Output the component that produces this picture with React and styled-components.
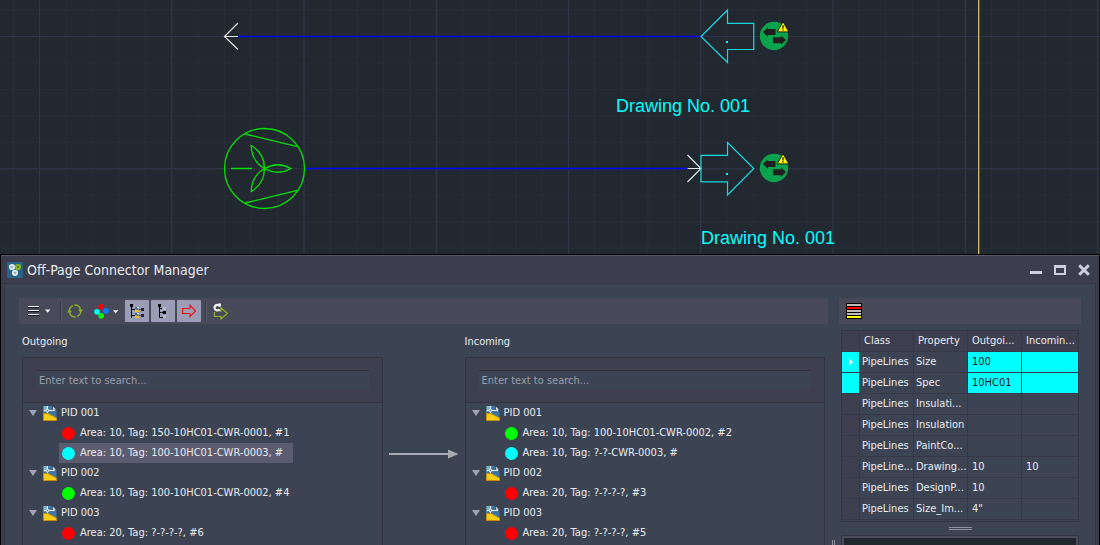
import React from "react";
import styled, { createGlobalStyle } from "styled-components";

const GlobalStyle = createGlobalStyle`
  *, *::before, *::after {
    box-sizing: border-box;
  }

  body {
    margin: 0;
    background: #000;
    color: #e9ebf2;
    font-family: "DejaVu Sans Condensed", "DejaVu Sans", sans-serif;
    font-size: 11px;
    line-height: 20px;
  }

  button, input, table {
    font: inherit;
    color: inherit;
  }
`;

const Screen = styled.div`
  display: flex;
  flex-direction: column;
  height: 100vh;
  overflow: hidden;
`;

const Canvas = styled.svg`
  display: block;
  flex: none;
  width: 100%;
  height: 254px;
  background: #212830;

  text {
    fill: #00ffff;
    font-family: "Liberation Sans", Arial, sans-serif;
    font-size: 18px;
  }
`;

const Dialog = styled.section`
  display: flex;
  flex-direction: column;
  flex: 1;
  min-height: 0;
  margin: 1px 1px 0;
  padding: 0 3px;
  border-top: 1px solid #555869;
  background: #3c3e4d;
`;

const TitleBar = styled.header`
  display: flex;
  align-items: center;
  height: 27px;
  padding-left: 3px;

  h1 {
    flex: 1;
    margin: 0 0 0 4px;
    font-size: 14px;
    font-weight: normal;
  }
`;

const WindowButton = styled.button`
  display: flex;
  width: 24px;
  height: 24px;
  padding: 0;
  align-items: center;
  justify-content: center;
  border: 0;
  background: none;
`;

const Body = styled.div`
  display: flex;
  flex: 1;
  min-height: 0;
  padding: 14px 14px 0;
  border: 1px solid #343542;
  border-bottom: 0;
  background: #3c4453;
`;

const Main = styled.div`
  display: flex;
  flex: 1;
  flex-direction: column;
  min-width: 0;
`;

const Side = styled.aside`
  display: flex;
  flex: none;
  flex-direction: column;
  width: 242px;
`;

const Toolbar = styled.div`
  display: flex;
  flex: none;
  align-items: center;
  height: 26px;
  padding: 0 3px;
  background: #484a59;
`;

const ToolButton = styled.button`
  display: flex;
  align-items: center;
  justify-content: center;
  width: ${(props) => props.$width || 24}px;
  height: 22px;
  margin-right: 2px;
  padding: 0;
  border: 0;
  border-radius: 1px;
  background: ${(props) => (props.$on ? "#9b9db6" : "none")};
`;

const Divider = styled.span`
  width: 1px;
  height: 19px;
  margin: 0 2px;
  background: #363745;
  box-shadow: 1px 0 #5a5c6b;
`;

const Trees = styled.div`
  display: flex;
  flex: 1;
  min-height: 0;
  padding: 8px 3px 0;
`;

const Column = styled.div`
  display: flex;
  flex: 1;
  flex-direction: column;
  min-width: 0;

  h2 {
    margin: 0 0 5px;
    font-size: 11px;
    font-weight: normal;
  }
`;

const TreePanel = styled.div`
  flex: 1;
  border: 1px solid #343542;
  border-bottom: 0;
`;

const SearchArea = styled.div`
  height: 45px;
  padding: 12px 13px;
  border-bottom: 1px solid #343542;
  background: #3e3f4e;
`;

const SearchBox = styled.input`
  display: block;
  width: 100%;
  height: 20px;
  padding: 0 3px;
  border: 0;
  border-top: 1px solid #30313d;
  outline: 0;
  background: #3c4453;

  &::placeholder {
    color: #9a9dab;
    opacity: 1;
  }
`;

const TreeList = styled.ul`
  margin: 0;
  padding: 0;
  list-style: none;
`;

const FolderRow = styled.button`
  display: flex;
  align-items: center;
  height: 20px;
  padding: 0 0 0 6px;
  border: 0;
  background: none;
  white-space: nowrap;

  svg + svg {
    margin: 0 4px 0 6px;
  }
`;

const ItemRow = styled.button`
  display: flex;
  align-items: center;
  height: 20px;
  margin-left: 36px;
  padding: 0 10px 0 3px;
  border: 0;
  background: ${(props) => (props.$selected ? "#5c5c71" : "none")};
  white-space: nowrap;
`;

const Dot = styled.span`
  width: 13px;
  height: 13px;
  margin-right: 5px;
  border-radius: 50%;
  background: ${(props) => props.$color};
`;

const Link = styled.div`
  flex: none;
  width: 82px;
  padding: 110px 6px 0;

  svg {
    display: block;
  }
`;

const Splitter = styled.div`
  display: flex;
  flex: none;
  align-items: flex-end;
  justify-content: center;
  width: 11px;
`;

const GripBars = styled.span`
  width: ${(props) => (props.$vertical ? 3 : 23)}px;
  height: ${(props) => (props.$vertical ? 5 : 3)}px;
  border: solid #8d91a0;
  border-width: ${(props) => (props.$vertical ? "0 1px" : "1px 0")};
`;

const TableFrame = styled.div`
  margin: 6px 2px 0;
  padding-bottom: 1px;
  border: 1px solid #343542;
`;

const PropertyTable = styled.table`
  width: 100%;
  table-layout: fixed;
  border-collapse: separate;
  border-spacing: 0;

  th, td {
    height: 21px;
    padding: 0 0 0 2px;
    overflow: hidden;
    border-right: 1px solid #363846;
    border-bottom: 1px solid #363846;
    font-weight: normal;
    line-height: 20px;
    text-align: left;
    white-space: nowrap;
  }

  th {
    padding-left: 4px;
    background: #3e3f4e;
  }

  th:last-child, td:last-child {
    border-right: 0;
  }
`;

const Cell = styled.td`
  && {
    padding-left: ${(props) => (props.$value ? 4 : 2)}px;
  }
  background: ${(props) => (props.$diff ? "#00ffff" : "none")};
  color: ${(props) => (props.$diff ? "#101820" : "inherit")};
`;

const Indicator = styled.td`
  background: ${(props) => (props.$diff ? "#00ffff" : "#3e3f4e")};

  svg {
    display: block;
    margin-left: 5px;
  }
`;

const SideGrip = styled.div`
  display: flex;
  justify-content: center;
  padding: 5px 0;
`;

const Preview = styled.div`
  flex: 1;
  margin: 0 2px;
  border: solid #343542;
  border-width: 1px 1px 0;
  padding: 2px 2px 0;
  background: #4a4c5a;

  div {
    height: 100%;
    background: #212830;
  }
`;

const BLUE = "#0505fa";
const CYAN = "#18d6dc";

const OpcBadge = ({ y }) => (
  <g transform={`translate(760 ${y})`}>
    <circle cx="14" cy="14" r="14.2" fill="#0aa24c" />
    <path d="M2.8 10 L8 5.5 V7 H15.5 V13 H8 V14.7 Z" fill="#231f20" />
    <path d="M26 18 L21 13.5 V15.2 H13 V21.2 H21 V22.7 Z" fill="#231f20" />
    <path d="M23 -0.4 L28.8 9.9 H17.2 Z" fill="#fff200" stroke="#111" strokeWidth="0.9" strokeLinejoin="round" />
    <path d="M23 3.2 V6.4 M23 7.2 V8.6" stroke="#111" strokeWidth="1.2" />
  </g>
);

const Drawing = () => (
  <Canvas role="img" aria-label="P&ID drawing">
    <defs>
      <pattern id="minor" x="39" y="36" width="26.45" height="26.45" patternUnits="userSpaceOnUse">
        <path d="M0.5 0 V26.45 M0 0.5 H26.45" stroke="#262d37" />
      </pattern>
      <pattern id="major" x="39" y="36" width="132.25" height="132.25" patternUnits="userSpaceOnUse">
        <path d="M0.5 0 V132.25 M0 0.5 H132.25" stroke="#303647" />
      </pattern>
    </defs>
    <rect width="100%" height="100%" fill="url(#minor)" />
    <rect width="100%" height="100%" fill="url(#major)" />
    <path d="M978.5 0 V254" stroke="#d9b667" />
    <path d="M979.5 0 V254" stroke="#5c5548" />

    <path d="M238 36.5 H701" stroke={BLUE} strokeWidth="1.4" />
    <path d="M304 168.5 H688" stroke={BLUE} strokeWidth="1.4" />

    <g fill="none" stroke="#e4e6e6" strokeWidth="1.2">
      <path d="M238 23 L224.5 36.5 L238 49.5 M224.5 36.5 H238" />
      <path d="M687.5 155 L701 168.5 L687.5 182 M687.5 168.5 H701" />
    </g>

    <g fill="none" stroke="#04e004" strokeWidth="1.3">
      <circle cx="264.5" cy="168.5" r="40" />
      <path d="M245 134 L297.5 146.7 M245 203 L297.5 190.3 M231 168.5 H252" />
      {[0, 120, 240].map((angle) => (
        <path
          key={angle}
          d="M264.5 168.5 Q277.7 161 291 168.5 Q277.7 176 264.5 168.5"
          transform={`rotate(${angle} 264.5 168.5)`}
        />
      ))}
    </g>

    <g fill="none" stroke={CYAN} strokeWidth="1.2">
      <path d="M701 36.5 L727.5 10 V23.3 H753.8 V49.5 H727.5 V62.5 Z" />
      <path d="M701 155.3 H727.5 V142.5 L753.8 168.5 L727.5 195 V181.8 H701 Z" />
    </g>
    <path d="M726 41 h2 v2 h-2 Z M726 173 h2 v2 h-2 Z" fill="#00ffff" />
    <OpcBadge y={22} />
    <OpcBadge y={154} />
    <text x="616" y="112">Drawing No. 001</text>
    <text x="701" y="244">Drawing No. 001</text>
  </Canvas>
);

const AppIcon = () => (
  <svg width="16" height="16" viewBox="0 0 16 16" aria-hidden="true">
    <rect width="16" height="16" rx="1" fill="#286488" />
    <g fill="#8da6b4" strokeWidth="2">
      <circle cx="5" cy="5" r="2.1" stroke="#dde6ea" />
      <circle cx="11" cy="5" r="2.1" stroke="#88b62c" fill="#48751e" />
      <circle cx="8" cy="10.8" r="2.1" stroke="#dde6ea" />
    </g>
  </svg>
);

const MenuIcon = () => (
  <svg width="24" height="12" viewBox="0 0 24 12" aria-hidden="true">
    <path d="M1 2.5 H12 M1 6.5 H12 M1 10.5 H12" stroke="#15161c" />
    <path d="M1 1.5 H12 M1 5.5 H12 M1 9.5 H12" stroke="#f2f3f5" />
    <path d="M18 4.5 H23.4 L20.7 7.8 Z" fill="#f2f3f5" />
  </svg>
);

const RefreshIcon = () => (
  <svg width="16" height="14" viewBox="0 0 16 14" aria-hidden="true">
    <g fill="none" stroke="#88ae22" strokeWidth="1.5">
      <path d="M2.5 9 A5.8 5.8 0 0 1 6 1.6" />
      <path d="M7.3 1.1 A5.8 5.8 0 0 1 13.4 5.5" />
      <path d="M13.6 5.5 A5.8 5.8 0 0 1 10 12.4" />
      <path d="M8.7 12.9 A5.8 5.8 0 0 1 2.6 8.6" />
    </g>
    <path d="M0 8.6 L2.6 5.2 L5 8.2 Z M11 5.6 H16 L13.7 8.8 Z" fill="#88ae22" />
  </svg>
);

const ColorsIcon = () => (
  <svg width="25" height="15" viewBox="0 0 25 15" aria-hidden="true">
    <circle cx="7.2" cy="2.9" r="2.8" fill="#ff0000" />
    <circle cx="3" cy="7.7" r="2.8" fill="#00ffff" />
    <circle cx="12" cy="6.9" r="2.8" fill="#0a78ff" />
    <circle cx="7.2" cy="11.8" r="2.8" fill="#00ff00" />
    <path d="M19 6.3 H24.4 L21.7 9.6 Z" fill="#f2f3f5" />
  </svg>
);

const TreeFilesIcon = () => (
  <svg width="16" height="16" viewBox="0 0 16 16" aria-hidden="true">
    <path d="M1 1 H4 V4 H1 Z" fill="#000" />
    <path d="M2.5 3 V15 M2.5 6.5 H7 M2.5 12.5 H7" stroke="#000" fill="none" />
    <path d="M6 4 H9 V7 H6 Z M6 10 H9 V13 H6 Z" fill="#3d78a8" />
    <path d="M6 6 L10 8 V9 H6 Z M6 12 L10 14 V15 H6 Z" fill="#ffc20a" />
    <path d="M8 4.5 H10 M8 10.5 H10" stroke="#e8e8e8" />
    <path d="M10 6.5 H12 M10 12.5 H12" stroke="#555" />
    <path d="M12 5 H15 V8 H12 Z M12 11 H15 V14 H12 Z" fill="#26282e" />
  </svg>
);

const TreeNodesIcon = () => (
  <svg width="16" height="16" viewBox="0 0 16 16" aria-hidden="true">
    <path d="M3 1 H6 V4 H3 Z M8 8 H11 V11 H8 Z" fill="#000" />
    <path d="M4.5 3 V14.5 M4.5 5.5 H7 M4.5 9.5 H8 M4.5 14.5 H8" stroke="#000" fill="none" />
    <path d="M8 4 H11 V7 H8 Z M8 12 H11 V15 H8 Z" fill="#b9bac2" />
  </svg>
);

const ArrowIcon = () => (
  <svg width="16" height="14" viewBox="0 0 16 14" aria-hidden="true">
    <path d="M1.5 4.5 H9 V1.2 L14.5 7 L9 12.6 V9.5 H1.5 Z" fill="none" stroke="#fa1018" strokeWidth="1.2" />
  </svg>
);

const ConvertIcon = () => (
  <svg width="16" height="17" viewBox="0 0 16 17" aria-hidden="true">
    <path d="M2.5 9 V13.5 H9 V16 L15.4 10.2 L9 4.8 V7.8 H7" fill="none" stroke="#8fb520" strokeWidth="1.2" />
    <path d="M7.6 3 A2.8 2.8 0 1 0 7.6 6.4" fill="none" stroke="#f4f4f6" strokeWidth="2.2" />
    <path d="M6.4 0.4 H9 V3.6 H6.4 Z" fill="#f4f4f6" />
  </svg>
);

const LinesIcon = () => (
  <svg width="16" height="16" viewBox="0 0 16 16" aria-hidden="true">
    <rect width="16" height="16" fill="#000" />
    <path d="M1 2 H15 M1 8 H15 M1 11 H15" stroke="#bdbdb5" strokeWidth="2" />
    <path d="M1 5 H15" stroke="#ff0000" strokeWidth="2" />
    <path d="M1 14 H15" stroke="#ffff00" strokeWidth="2" />
  </svg>
);

const Chevron = () => (
  <svg width="8" height="6" viewBox="0 0 8 6" aria-hidden="true">
    <path d="M0 0 H8 L4 6 Z" fill="#a0a3b4" />
  </svg>
);

const DrawingIcon = () => (
  <svg width="14" height="15" viewBox="0 0 14 15" aria-hidden="true">
    <path d="M0.5 0 H9.5 L13.5 4 V14 H0.5 Z" fill="#3c75a8" />
    <path d="M0.5 0 H6 L0.5 7 Z" fill="#7fb4cf" />
    <path d="M9.5 0 V4 H13.5 Z" fill="#fff" stroke="#22364c" strokeWidth="0.7" />
    <path d="M1 4.5 H12 M4.5 0 V7" stroke="#fff" />
    <circle cx="4.5" cy="4.5" r="1.3" fill="#3c75a8" stroke="#fff" />
    <path d="M0.5 7.5 H5 L13.5 12 V14.5 H0.5 Z" fill="#f8cd18" stroke="#c98f0c" />
  </svg>
);

const outgoing = [
  {
    name: "PID 001",
    items: [
      { color: "#ff0000", text: "Area: 10, Tag: 150-10HC01-CWR-0001, #1" },
      { color: "#00ffff", text: "Area: 10, Tag: 100-10HC01-CWR-0003, #", selected: true },
    ],
  },
  { name: "PID 002", items: [{ color: "#00ff00", text: "Area: 10, Tag: 100-10HC01-CWR-0002, #4" }] },
  { name: "PID 003", items: [{ color: "#ff0000", text: "Area: 20, Tag: ?-?-?-?, #6" }] },
];

const incoming = [
  {
    name: "PID 001",
    items: [
      { color: "#00ff00", text: "Area: 10, Tag: 100-10HC01-CWR-0002, #2" },
      { color: "#00ffff", text: "Area: 10, Tag: ?-?-CWR-0003, #" },
    ],
  },
  { name: "PID 002", items: [{ color: "#ff0000", text: "Area: 20, Tag: ?-?-?-?, #3" }] },
  { name: "PID 003", items: [{ color: "#ff0000", text: "Area: 20, Tag: ?-?-?-?, #5" }] },
];

const properties = [
  ["PipeLines", "Size", "100", "", true],
  ["PipeLines", "Spec", "10HC01", "", true],
  ["PipeLines", "Insulati...", "", ""],
  ["PipeLines", "Insulation", "", ""],
  ["PipeLines", "PaintCo...", "", ""],
  ["PipeLine...", "Drawing...", "10", "10"],
  ["PipeLines", "DesignP...", "10", ""],
  ["PipeLines", "Size_Im...", '4"', ""],
];

const ConnectorTree = ({ title, folders }) => (
  <Column>
    <h2>{title}</h2>
    <TreePanel>
      <SearchArea>
        <SearchBox type="text" aria-label={`Search ${title}`} placeholder="Enter text to search..." />
      </SearchArea>
      <TreeList>
        {folders.map((folder) => (
          <li key={folder.name}>
            <FolderRow aria-expanded="true">
              <Chevron />
              <DrawingIcon />
              {folder.name}
            </FolderRow>
            <TreeList>
              {folder.items.map((item) => (
                <li key={item.text}>
                  <ItemRow $selected={item.selected}>
                    <Dot $color={item.color} />
                    {item.text}
                  </ItemRow>
                </li>
              ))}
            </TreeList>
          </li>
        ))}
      </TreeList>
    </TreePanel>
  </Column>
);

const Properties = () => (
  <TableFrame>
    <PropertyTable>
      <colgroup>
        <col width="18" />
        <col width="54" />
        <col width="54" />
        <col width="54" />
        <col />
      </colgroup>
      <thead>
        <tr>
          <th aria-label="Current row" />
          <th>Class</th>
          <th>Property</th>
          <th>Outgoi...</th>
          <th>Incomin...</th>
        </tr>
      </thead>
      <tbody>
        {properties.map(([cls, prop, out, inc, diff], i) => (
          <tr key={prop}>
            <Indicator $diff={diff}>
              {i === 0 && (
                <svg width="4" height="8" viewBox="0 0 4 8" aria-hidden="true">
                  <path d="M0 0 L4 4 L0 8 Z" fill="#f4f6fa" />
                </svg>
              )}
            </Indicator>
            <Cell>{cls}</Cell>
            <Cell>{prop}</Cell>
            <Cell $value $diff={diff}>{out}</Cell>
            <Cell $value $diff={diff}>{inc}</Cell>
          </tr>
        ))}
      </tbody>
    </PropertyTable>
  </TableFrame>
);

const App = () => {
  return (
    <Screen>
      <GlobalStyle />
      <Drawing />
      <Dialog>
        <TitleBar>
          <AppIcon />
          <h1>Off-Page Connector Manager</h1>
          <WindowButton aria-label="Minimize">
            <svg width="12" height="12" viewBox="0 0 12 12">
              <path d="M0 8.5 H12" stroke="#cdd0dc" strokeWidth="3" />
            </svg>
          </WindowButton>
          <WindowButton aria-label="Maximize">
            <svg width="12" height="12" viewBox="0 0 12 12">
              <path d="M1 2.5 H11 V10 H1 Z" fill="none" stroke="#cdd0dc" strokeWidth="2" />
              <path d="M0 2.5 H12" stroke="#cdd0dc" strokeWidth="3" />
            </svg>
          </WindowButton>
          <WindowButton aria-label="Close">
            <svg width="12" height="12" viewBox="0 0 12 12">
              <path d="M1.2 1.2 L10.8 10.8 M10.8 1.2 L1.2 10.8" stroke="#cdd0dc" strokeWidth="3" />
            </svg>
          </WindowButton>
        </TitleBar>
        <Body>
          <Main>
            <Toolbar>
              <ToolButton $width={34} aria-label="Menu">
                <MenuIcon />
              </ToolButton>
              <Divider />
              <ToolButton aria-label="Refresh">
                <RefreshIcon />
              </ToolButton>
              <ToolButton $width={34} aria-label="Colors">
                <ColorsIcon />
              </ToolButton>
              <ToolButton $on aria-label="Show drawings">
                <TreeFilesIcon />
              </ToolButton>
              <ToolButton $on aria-label="Show nodes">
                <TreeNodesIcon />
              </ToolButton>
              <ToolButton $on aria-label="Show arrows">
                <ArrowIcon />
              </ToolButton>
              <Divider />
              <ToolButton aria-label="Convert">
                <ConvertIcon />
              </ToolButton>
            </Toolbar>
            <Trees>
              <ConnectorTree title="Outgoing" folders={outgoing} />
              <Link>
                <svg width="70" height="24" viewBox="0 0 70 24" aria-hidden="true">
                  <path d="M0 12 H60" stroke="#a9abb0" strokeWidth="2" />
                  <path d="M59 7.5 L69.5 12 L59 16.5 Z" fill="#a9abb0" />
                </svg>
              </Link>
              <ConnectorTree title="Incoming" folders={incoming} />
            </Trees>
          </Main>
          <Splitter>
            <GripBars $vertical />
          </Splitter>
          <Side>
            <Toolbar>
              <ToolButton aria-label="Highlight differences">
                <LinesIcon />
              </ToolButton>
            </Toolbar>
            <Properties />
            <SideGrip>
              <GripBars />
            </SideGrip>
            <Preview>
              <div />
            </Preview>
          </Side>
        </Body>
      </Dialog>
    </Screen>
  );
};

export default App;
